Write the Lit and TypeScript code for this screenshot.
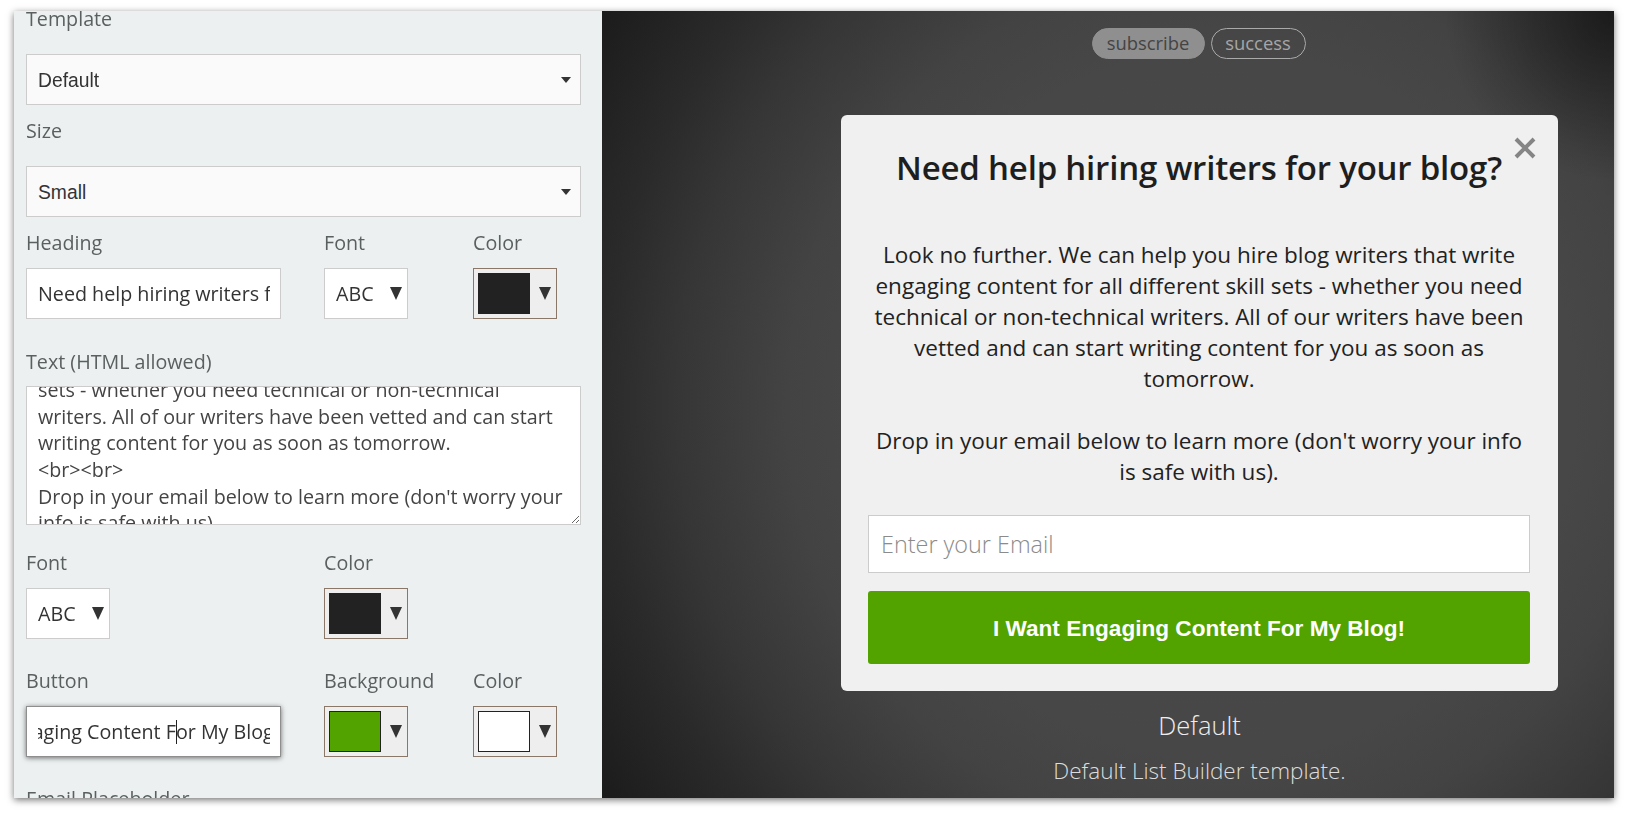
import { LitElement, html, css } from "lit";
import { customElement } from "lit/decorators.js";

const COPY =
  "Look no further. We can help you hire blog writers that write engaging content for all different skill\nsets - whether you need technical or non-technical\nwriters. All of our writers have been vetted and can start\nwriting content for you as soon as tomorrow.\n<br><br>\nDrop in your email below to learn more (don't worry your info is safe with us).";

@customElement("app-root")
export class AppRoot extends LitElement {
  static styles = css`
    :host {
      display: block;
      width: 1628px;
      height: 817px;
      box-sizing: border-box;
      padding: 11px 14px 19px;
      background: #fff;
      font-family: "Open Sans", sans-serif;
      overflow: hidden;
    }
    * { box-sizing: border-box; }
    .frame {
      display: flex;
      height: 787px;
      box-shadow: 0 2px 7px rgba(0, 0, 0, 0.55);
    }
    .form {
      width: 588px;
      flex: none;
      background: #ecf0f1;
      padding: 0 21px 0 12px;
      overflow: hidden;
      color: #555;
    }
    .form > :first-child { margin-top: -6px; }
    label {
      display: block;
      height: 28px;
      line-height: 28px;
      font-size: 19.7px;
      color: #5a5f60;
      white-space: nowrap;
    }
    .stack label { margin-bottom: 21px; }
    .stack { margin-bottom: 12px; }
    .row {
      display: grid;
      grid-template-columns: 298px 149px 84px;
    }
    .row label { margin-bottom: 11px; }
    .row1 { margin-bottom: 29px; }
    .row3 { margin-bottom: 28px; }
    .ta-group { margin-bottom: 24px; }
    .ta-group label { margin-bottom: 10px; }
    .select-wrap { position: relative; display: block; }
    select {
      appearance: none;
      display: block;
      width: 100%;
      height: 51px;
      border: 1px solid #ccc;
      border-radius: 0;
      padding: 0 11px;
      margin: 0;
      color: #333;
      outline: none;
    }
    .wide select {
      background: #fafafa;
      padding-top: 2px;
      font: 19.3px "Liberation Sans", sans-serif;
    }
    .wide::after {
      content: "";
      position: absolute;
      right: 10px;
      top: 23px;
      border-left: 5px solid transparent;
      border-right: 5px solid transparent;
      border-top: 6px solid #333;
    }
    .abc { width: 84px; }
    .abc select {
      background: #fff;
      font: 19.7px "Open Sans", sans-serif;
    }
    .abc::after {
      content: "";
      position: absolute;
      right: 6px;
      top: 19px;
      border-left: 6px solid transparent;
      border-right: 6px solid transparent;
      border-top: 13px solid #333;
    }
    input {
      display: block;
      font: 19.7px "Open Sans", sans-serif;
      color: #333;
      background: #fff;
      border: 1px solid #ccc;
      border-radius: 0;
      outline: none;
      margin: 0;
    }
    .text-input {
      width: 255px;
      height: 51px;
      padding: 0 10px 0 11px;
    }
    .focused {
      width: 255px;
      height: 51px;
      padding: 0 10px 0 11px;
      background: #fff;
      border: 1px solid #8e8e8e;
      box-shadow: 0 1px 5px rgba(0, 0, 0, 0.55);
      font-size: 19.7px;
      line-height: 49px;
      color: #333;
    }
    .clip {
      display: flex;
      justify-content: flex-end;
      overflow: hidden;
      white-space: nowrap;
    }
    .scroller { flex: none; margin-right: -9px; }
    .caret {
      display: inline-block;
      width: 1px;
      height: 24px;
      margin: 0 -1px 0 0;
      background: #222;
      vertical-align: -5px;
    }
    textarea {
      display: block;
      width: 100%;
      height: 139px;
      padding: 8px 12px 0 11px;
      border: 1px solid #ccc;
      border-radius: 0;
      background: #fff;
      font: 19.7px/26.6px "Open Sans", sans-serif;
      color: #444;
      outline: none;
      scrollbar-width: none;
      margin: 0;
      resize: vertical;
    }
    .swatch-btn {
      display: flex;
      align-items: center;
      width: 84px;
      height: 51px;
      padding: 0 0 0 4px;
      border: 1px solid #8b7767;
      background: #eee;
    }
    .chip {
      width: 52px;
      height: 41px;
      border: 1px solid #222;
      flex: none;
    }
    .tri {
      margin-left: 9px;
      border-left: 6px solid transparent;
      border-right: 6px solid transparent;
      border-top: 13px solid #333;
    }
    .preview {
      flex: 1;
      min-width: 0;
      padding: 17px 56px 0 239px;
      display: flex;
      flex-direction: column;
      align-items: center;
      overflow: hidden;
      background:
        radial-gradient(circle 170px at 100% 0, rgba(0, 0, 0, 0.5), rgba(0, 0, 0, 0) 100%),
        radial-gradient(circle 640px at 620px 50%, #484848 0%, #474747 55%, #434343 68%, #363636 85%, #2a2a2a 97%, #1c1c1c 114%);
    }
    .pills { display: flex; gap: 6px; height: 31px; margin-right: 2px; }
    .pill {
      height: 31px;
      border-radius: 15.5px;
      font: 18.4px/27px "Open Sans", sans-serif;
      padding: 0 0 3px;
      text-align: center;
      border: 1px solid #aaa;
      background: transparent;
      color: #a6a6a6;
    }
    .pill.on {
      width: 113px;
      background: #8f8f8f;
      border-color: #8f8f8f;
      color: #444;
    }
    .pill.off { width: 95px; }
    .card {
      position: relative;
      margin-top: 56px;
      width: 717px;
      flex: none;
      height: 576px;
      background: #f0f0f0;
      border-radius: 6px;
      padding: 31px 28px 26px 27px;
      text-align: center;
      color: #222;
    }
    h1 {
      margin: 0 0 49px;
      font: 600 33px/44px "Open Sans", sans-serif;
      letter-spacing: -0.2px;
      color: #1e1e1e;
      white-space: nowrap;
    }
    p.body {
      margin: 0 0 28px;
      font: 22.5px/31px "Open Sans", sans-serif;
      color: #222;
    }
    .close {
      position: absolute;
      top: 22px;
      right: 22px;
      width: 22px;
      height: 22px;
      display: block;
    }
    .email {
      width: 100%;
      height: 58px;
      padding: 0 12px;
      font-size: 23.4px;
      font-weight: 300;
      border: 1px solid #ccc;
    }
    .email::placeholder { color: #8b8b8b; opacity: 1; }
    .cta {
      display: block;
      width: 100%;
      height: 73px;
      margin-top: 18px;
      padding: 2px 0 0;
      border: 0;
      border-radius: 3px;
      background: #52a300;
      color: #fff;
      font: bold 22.6px "Liberation Sans", sans-serif;
    }
    .title {
      margin-top: 16px;
      font-size: 25.5px;
      line-height: 36px;
      font-weight: 300;
      color: #eee;
    }
    .desc {
      margin-top: 13px;
      font-size: 22.5px;
      line-height: 30px;
      font-weight: 300;
      color: #ddd;
    }
  `;

  firstUpdated() {
    const ta = this.renderRoot.querySelector("textarea");
    if (ta) ta.scrollTop = 71;
  }

  private swatch(color: string) {
    return html`<button class="swatch-btn" type="button">
      <span class="chip" style="background:${color}"></span><span class="tri"></span>
    </button>`;
  }

  private font() {
    return html`<span class="select-wrap abc"><select><option>ABC</option></select></span>`;
  }

  render() {
    return html`
      <div class="frame">
        <section class="form">
          <div class="stack">
            <label>Template</label>
            <span class="select-wrap wide"><select><option>Default</option></select></span>
          </div>
          <div class="stack">
            <label>Size</label>
            <span class="select-wrap wide"><select><option>Small</option></select></span>
          </div>
          <div class="row row1">
            <div>
              <label>Heading</label>
              <input class="text-input" value="Need help hiring writers for your blog?" />
            </div>
            <div><label>Font</label>${this.font()}</div>
            <div><label>Color</label>${this.swatch("#222222")}</div>
          </div>
          <div class="ta-group">
            <label>Text (HTML allowed)</label>
            <textarea .value=${COPY}></textarea>
          </div>
          <div class="row row3">
            <div><label>Font</label>${this.font()}</div>
            <div><label>Color</label>${this.swatch("#222222")}</div>
            <div></div>
          </div>
          <div class="row row3">
            <div>
              <label>Button</label>
              <div class="focused">
                <div class="clip"><span class="scroller">I Want Engaging Content F<span class="caret"></span>or My Blog!</span></div>
              </div>
            </div>
            <div><label>Background</label>${this.swatch("#52a300")}</div>
            <div><label>Color</label>${this.swatch("#ffffff")}</div>
          </div>
          <label>Email Placeholder</label>
        </section>
        <section class="preview">
          <div class="pills">
            <button class="pill on" type="button">subscribe</button>
            <button class="pill off" type="button">success</button>
          </div>
          <div class="card">
            <svg class="close" viewBox="0 0 22 22" aria-label="Close">
              <path d="M2 2L20 20M20 2L2 20" stroke="#858585" stroke-width="4" fill="none" />
            </svg>
            <h1>Need help hiring writers for your blog?</h1>
            <p class="body">
              Look no further. We can help you hire blog writers that write engaging content for all different skill sets - whether you need technical or non-technical writers. All of our writers have been vetted and can start writing content for you as soon as tomorrow.<br /><br />Drop in your email below to learn more (don't worry your info is safe with us).
            </p>
            <input class="email" placeholder="Enter your Email" />
            <button class="cta" type="button">I Want Engaging Content For My Blog!</button>
          </div>
          <div class="title">Default</div>
          <div class="desc">Default List Builder template.</div>
        </section>
      </div>
    `;
  }
}
